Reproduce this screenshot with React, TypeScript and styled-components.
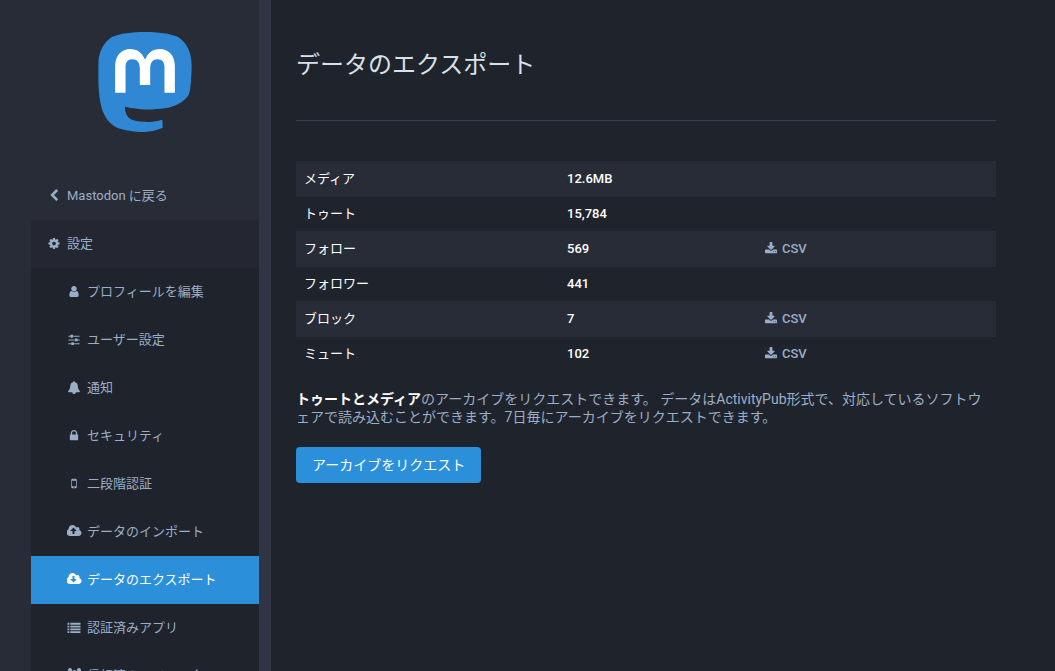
import React from "react";
import styled, { createGlobalStyle } from "styled-components";

const GlobalStyle = createGlobalStyle`
  *, *::before, *::after { box-sizing: border-box; }
  body {
    margin: 0;
    background: #1f232b;
    color: #ffffff;
    font-family: Roboto, "Noto Sans CJK JP", sans-serif;
    font-size: 13px;
    line-height: 18px;
  }
`;

const iconPaths = {
  chevronLeft:
    "M1427 301l-531 531 531 531q19 19 19 45t-19 45l-166 166q-19 19-45 19t-45-19l-742-742q-19-19-19-45t19-45l742-742q19-19 45-19t45 19l166 166q19 19 19 45t-19 45z",
  cog: "M1152 896q0-106-75-181t-181-75-181 75-75 181 75 181 181 75 181-75 75-181zm512-109v222q0 12-8 23t-20 13l-185 28q-19 54-39 91 35 50 107 138 10 12 10 25t-9 23q-27 37-99 108t-94 71q-12 0-26-9l-138-108q-44 23-91 38-16 136-29 186-7 28-36 28h-222q-14 0-24.5-8.5t-11.5-21.5l-28-184q-49-16-90-37l-141 107q-10 9-25 9-14 0-25-11-126-114-165-168-7-10-7-23 0-12 8-23 15-21 51-66.5t54-70.5q-27-50-41-99l-183-27q-13-2-21-12.5t-8-23.5v-222q0-12 8-23t19-13l186-28q14-46 39-92-40-57-107-138-10-12-10-24 0-10 9-23 26-36 98.5-107.5t94.5-71.5q13 0 26 10l138 107q44-23 91-38 16-136 29-186 7-28 36-28h222q14 0 24.5 8.5t11.5 21.5l28 184q49 16 90 37l142-107q9-9 24-9 13 0 25 10 129 119 165 170 7 8 7 22 0 12-8 23-15 21-51 66.5t-54 70.5q26 50 41 98l183 28q13 2 21 12.5t8 23.5z",
  user: "M1536 1399q0 109-62.5 187t-150.5 78h-854q-88 0-150.5-78t-62.5-187q0-85 8.5-160.5t31.5-152 58.5-131 94-89 134.5-34.5q131 128 313 128t313-128q76 0 134.5 34.5t94 89 58.5 131 31.5 152 8.5 160.5zm-256-887q0 159-112.5 271.5t-271.5 112.5-271.5-112.5-112.5-271.5 112.5-271.5 271.5-112.5 271.5 112.5 112.5 271.5z",
  sliders:
    "M480 1408v128h-352v-128h352zm352-128q26 0 45 19t19 45v256q0 26-19 45t-45 19h-256q-26 0-45-19t-19-45v-256q0-26 19-45t45-19h256zm160-384v128h-864v-128h864zm-640-512v128h-224v-128h224zm1312 1024v128h-736v-128h736zm-960-1152q26 0 45 19t19 45v256q0 26-19 45t-45 19h-256q-26 0-45-19t-19-45v-256q0-26 19-45t45-19h256zm640 512q26 0 45 19t19 45v256q0 26-19 45t-45 19h-256q-26 0-45-19t-19-45v-256q0-26 19-45t45-19h256zm320 128v128h-224v-128h224zm0-512v128h-864v-128h864z",
  bell: "M912 1696q0-16-16-16-59 0-101.5-42.5t-42.5-101.5q0-16-16-16t-16 16q0 73 51.5 124.5t124.5 51.5q16 0 16-16zm816-288q0 52-38 90t-90 38h-448q0 106-75 181t-181 75-181-75-75-181h-448q-52 0-90-38t-38-90q50-42 91-88t85-119.5 74.5-158.5 50-206 19.5-260q0-152 117-282.5t307-158.5q-8-19-8-39 0-40 28-68t68-28 68 28 28 68q0 20-8 39 190 28 307 158.5t117 282.5q0 139 19.5 260t50 206 74.5 158.5 85 119.5 91 88z",
  lock: "M640 768h512v-192q0-106-75-181t-181-75-181 75-75 181v192zm832 96v576q0 40-28 68t-68 28h-960q-40 0-68-28t-28-68v-576q0-40 28-68t68-28h32v-192q0-184 132-316t316-132 316 132 132 316v192h32q40 0 68 28t28 68z",
  mobile:
    "M976 1408q0-33-23.5-56.5t-56.5-23.5-56.5 23.5-23.5 56.5 23.5 56.5 56.5 23.5 56.5-23.5 23.5-56.5zm208-160v-704q0-13-9.5-22.5t-22.5-9.5h-512q-13 0-22.5 9.5t-9.5 22.5v704q0 13 9.5 22.5t22.5 9.5h512q13 0 22.5-9.5t9.5-22.5zm-192-848q0-16-16-16h-160q-16 0-16 16t16 16h160q16 0 16-16zm288-16v1024q0 52-38 90t-90 38h-512q-52 0-90-38t-38-90v-1024q0-52 38-90t90-38h512q52 0 90 38t38 90z",
  cloudUpload:
    "M1216 864q0-14-9-23l-352-352q-9-9-23-9t-23 9l-351 351q-10 12-10 24 0 14 9 23t23 9h224v352q0 13 9.5 22.5t22.5 9.5h192q13 0 22.5-9.5t9.5-22.5v-352h224q13 0 22.5-9.5t9.5-22.5zm640 288q0 159-112.5 271.5t-271.5 112.5h-1088q-185 0-316.5-131.5t-131.5-316.5q0-130 70-240t188-165q-2-30-2-43 0-212 150-362t362-150q156 0 285.5 87t188.5 231q71-62 166-62 106 0 181 75t75 181q0 76-41 138 130 31 213.5 135.5t83.5 238.5z",
  cloudDownload:
    "M1216 928q0-14-9-23t-23-9h-224v-352q0-13-9.5-22.5t-22.5-9.5h-192q-13 0-22.5 9.5t-9.5 22.5v352h-224q-13 0-22.5 9.5t-9.5 22.5q0 14 9 23l352 352q9 9 23 9t23-9l351-351q10-12 10-24zm640 224q0 159-112.5 271.5t-271.5 112.5h-1088q-185 0-316.5-131.5t-131.5-316.5q0-130 70-240t188-165q-2-30-2-43 0-212 150-362t362-150q156 0 285.5 87t188.5 231q71-62 166-62 106 0 181 75t75 181q0 76-41 138 130 31 213.5 135.5t83.5 238.5z",
  list: "M0 256h256v256h-256zM0 640h256v256h-256zM0 1024h256v256h-256zM0 1408h256v256h-256zM384 256h1408v256h-1408zM384 640h1408v256h-1408zM384 1024h1408v256h-1408zM384 1408h1408v256h-1408z",
  users:
    "M593 896q-162 5-265 128h-134q-82 0-138-40.500t-56-118.500q0-353 124-353 6 0 43.500 21t97.500 42.500 119 21.500q67 0 133-23-5 37-5 66 0 139 81 256zM1664 1533q0 120-73 189.500t-194 69.500h-874q-121 0-194-69.500t-73-189.500q0-53 3.500-103.500t14-109 26.500-108.500 43-97.500 62-81 85.500-53.500 111.500-20q10 0 43 21.500t73 48 107 48 135 21.500 135-21.500 107-48 73-48 43-21.500q61 0 111.500 20t85.500 53.500 62 81 43 97.500 26.500 108.500 14 109 3.500 103.500zM640 256q0 106-75 181t-181 75-181-75-75-181 75-181 181-75 181 75 75 181zM1344 640q0 159-112.500 271.500t-271.500 112.500-271.500-112.500-112.500-271.500 112.500-271.500 271.500-112.500 271.500 112.500 112.500 271.500zM1920 865q0 78-56 118.500t-138 40.500h-134q-103-123-265-128 81-117 81-256 0-29-5-66 66 23 133 23 59 0 119-21.500t97.500-42.500 43.500-21q124 0 124 353zM1792 256q0 106-75 181t-181 75-181-75-75-181 75-181 181-75 181 75 75 181z",
  download:
    "M1344 1344q0-26-19-45t-45-19-45 19-19 45 19 45 45 19 45-19 19-45zm256 0q0-26-19-45t-45-19-45 19-19 45 19 45 45 19 45-19 19-45zm128-224v320q0 40-28 68t-68 28h-1472q-40 0-68-28t-28-68v-320q0-40 28-68t68-28h465l135 136q58 56 136 56t136-56l136-136h464q40 0 68 28t28 68zm-325-569q17 41-14 70l-448 448q-18 19-45 19t-45-19l-448-448q-31-29-14-70 17-39 59-39h256v-448q0-26 19-45t45-19h256q26 0 45 19t19 45v448h256q42 0 59 39z",
};

type IconName = keyof typeof iconPaths;

const wideIcons: IconName[] = ["cloudUpload", "cloudDownload", "users"];

const IconSvg = styled.svg<{ $wide: boolean }>`
  flex: none;
  width: ${(p) => (p.$wide ? 15 : 14)}px;
  height: ${(p) => (p.$wide ? 14 : 13)}px;
  fill: currentColor;
`;

const IconSlot = styled.span`
  display: inline-flex;
  flex: none;
  align-items: center;
  justify-content: center;
  width: 16px;
  height: 16px;
`;

function Icon({ name }: { name: IconName }) {
  const wide = wideIcons.includes(name);
  return (
    <IconSlot>
      <IconSvg $wide={wide} viewBox={wide ? "0 0 1920 1792" : "0 0 1792 1792"} aria-hidden="true">
        <path d={iconPaths[name]} />
      </IconSvg>
    </IconSlot>
  );
}

const Wrapper = styled.div`
  display: flex;
  height: 100vh;
  overflow: hidden;
`;

const Sidebar = styled.aside`
  flex: 0 0 271px;
  padding-left: 31px;
  overflow: hidden;
  background: #282c37;
  border-right: 12px solid #313543;
`;

const LogoLink = styled.a`
  display: flex;
  justify-content: center;
  padding: 32px 0 40px;
`;

const Logo = styled.svg`
  display: block;
  width: 94px;
  height: 100px;
`;

const Menu = styled.ul`
  margin: 0;
  padding: 0;
  list-style: none;
`;

const SubMenu = styled(Menu)`
  background: #1f232b;
`;

const MenuLink = styled.a<{ $kind?: "section" | "sub" | "active" }>`
  display: flex;
  align-items: center;
  gap: 5px;
  height: 48px;
  padding-left: ${(p) => (p.$kind === "sub" || p.$kind === "active" ? 35 : 15)}px;
  border-radius: ${(p) => (p.$kind === "section" ? "4px 0 0 0" : "0")};
  background: ${(p) =>
    p.$kind === "active" ? "#2b90d9" : p.$kind === "section" ? "#242731" : "transparent"};
  color: ${(p) => (p.$kind === "active" ? "#ffffff" : "#9baec8")};
  text-decoration: none;
  white-space: nowrap;

  ${IconSlot} {
    padding-bottom: 2px;
  }
`;

const Content = styled.main`
  flex: 1;
  min-width: 0;
  padding: 49px 25px 20px;
  overflow: auto;
`;

const Inner = styled.div`
  max-width: 700px;
`;

const Title = styled.h2`
  margin: 0 0 40px;
  padding-bottom: 39px;
  border-bottom: 1px solid #393f4f;
  color: #d9e1e8;
  font-size: 24px;
  font-weight: 400;
  line-height: 32px;
`;

const Table = styled.table`
  width: 100%;
  margin-bottom: 19px;
  border-collapse: collapse;
  table-layout: fixed;
`;

const Row = styled.tr`
  > * {
    padding: 8px;
  }
  &:nth-child(odd) {
    background: #282c37;
  }
  &:nth-child(odd) > * {
    padding: 9px 8px;
  }
`;

const NameCell = styled.th`
  width: 263px;
  font-weight: 400;
  text-align: left;
`;

const ValueCell = styled.td<{ $width?: number }>`
  width: ${(p) => (p.$width ? `${p.$width}px` : "auto")};
  font-weight: 500;
`;

const CsvLink = styled.a`
  display: flex;
  align-items: center;
  gap: 3px;
  color: #9baec8;
  text-decoration: none;

  ${IconSlot} {
    padding-bottom: 2px;
  }
`;

const Hint = styled.p`
  margin: 0 0 21px;
  padding-right: 10px;
  color: #9baec8;
  font-size: 14px;
  line-height: 18px;
  line-break: loose;
`;

const Strong = styled.strong`
  color: #ffffff;
  font-weight: 700;
`;

const RequestButton = styled.button`
  height: 36px;
  padding: 0 16px;
  border: 0;
  border-radius: 4px;
  background: #2b90d9;
  color: #ffffff;
  font-family: inherit;
  font-size: 14px;
  font-weight: 400;
  line-height: 34px;
`;

const settings: { icon: IconName; label: string; active?: boolean }[] = [
  { icon: "user", label: "プロフィールを編集" },
  { icon: "sliders", label: "ユーザー設定" },
  { icon: "bell", label: "通知" },
  { icon: "lock", label: "セキュリティ" },
  { icon: "mobile", label: "二段階認証" },
  { icon: "cloudUpload", label: "データのインポート" },
  { icon: "cloudDownload", label: "データのエクスポート", active: true },
  { icon: "list", label: "認証済みアプリ" },
  { icon: "users", label: "信頼済みのインスタンス" },
];

const rows = [
  { name: "メディア", value: "12.6MB", csv: false },
  { name: "トゥート", value: "15,784", csv: false },
  { name: "フォロー", value: "569", csv: true },
  { name: "フォロワー", value: "441", csv: false },
  { name: "ブロック", value: "7", csv: true },
  { name: "ミュート", value: "102", csv: true },
];

export default function App() {
  return (
    <>
      <GlobalStyle />
      <Wrapper>
        <Sidebar>
          <LogoLink href="#" aria-label="Mastodon">
            <Logo viewBox="0 0 216.4144 232.00976" aria-hidden="true">
              <path
                fill="#3088d4"
                d="M211.80734 139.0875c-3.18125 16.36625-28.4925 34.2775-57.5625 37.74875-15.15875 1.80875-30.08375 3.47125-45.99875 2.74125-26.0275-1.1925-46.565-6.2125-46.565-6.2125 0 2.53375.15625 4.94625.46875 7.2025 3.38375 25.68625 25.47 27.225 46.39125 27.9425 21.11625.7225 39.91875-5.20625 39.91875-5.20625l.8675 19.09s-14.77 7.93125-41.08125 9.39c-14.50875.7975-32.52375-.365-53.50625-5.91875C9.23234 213.82 1.40609 165.31125.20859 116.09125c-.365-14.61375-.14-28.39375-.14-39.91875 0-50.33 32.97625-65.0825 32.97625-65.0825C49.67234 3.45375 78.20359.2425 107.86484 0h.72875c29.66125.2425 58.21125 3.45375 74.8375 11.09 0 0 32.975 14.7525 32.975 65.0825 0 0 .41375 37.13375-4.59875 62.915"
              />
              <path
                fill="#fff"
                d="M177.50984 80.077v60.94125h-24.14375v-59.15c0-12.46875-5.24625-18.7975-15.74-18.7975-11.6025 0-17.4175 7.5075-17.4175 22.3525v37.37625H96.20734V85.42325c0-14.845-5.81625-22.3525-17.41875-22.3525-10.49375 0-15.74 6.32875-15.74 18.7975v59.15H38.90484V80.077c0-12.455 3.17125-22.3525 9.54125-29.675 6.56875-7.3225 15.17125-11.07625 25.85-11.07625 12.355 0 21.71125 4.74875 27.8975 14.2475l6.01375 10.08125 6.015-10.08125c6.185-9.49875 15.54125-14.2475 27.8975-14.2475 10.6775 0 19.28 3.75375 25.85 11.07625 6.36875 7.3225 9.54 17.22 9.54 29.675"
              />
            </Logo>
          </LogoLink>
          <nav>
            <Menu>
              <li>
                <MenuLink href="#">
                  <Icon name="chevronLeft" />
                  Mastodon に戻る
                </MenuLink>
              </li>
              <li>
                <MenuLink href="#" $kind="section">
                  <Icon name="cog" />
                  設定
                </MenuLink>
                <SubMenu>
                  {settings.map((item) => (
                    <li key={item.label}>
                      <MenuLink
                        href="#"
                        $kind={item.active ? "active" : "sub"}
                        aria-current={item.active ? "page" : undefined}
                      >
                        <Icon name={item.icon} />
                        {item.label}
                      </MenuLink>
                    </li>
                  ))}
                </SubMenu>
              </li>
            </Menu>
          </nav>
        </Sidebar>
        <Content>
          <Inner>
            <Title>データのエクスポート</Title>
            <Table>
              <tbody>
                {rows.map((row) => (
                  <Row key={row.name}>
                    <NameCell scope="row">{row.name}</NameCell>
                    <ValueCell $width={196}>{row.value}</ValueCell>
                    <ValueCell>
                      {row.csv && (
                        <CsvLink href="#">
                          <Icon name="download" />
                          CSV
                        </CsvLink>
                      )}
                    </ValueCell>
                  </Row>
                ))}
              </tbody>
            </Table>
            <Hint>
              <Strong>トゥートとメディア</Strong>
              のアーカイブをリクエストできます。 データはActivityPub形式で、対応しているソフトウェアで読み込むことができます。7日毎にアーカイブをリクエストできます。
            </Hint>
            <RequestButton type="button">アーカイブをリクエスト</RequestButton>
          </Inner>
        </Content>
      </Wrapper>
    </>
  );
}
